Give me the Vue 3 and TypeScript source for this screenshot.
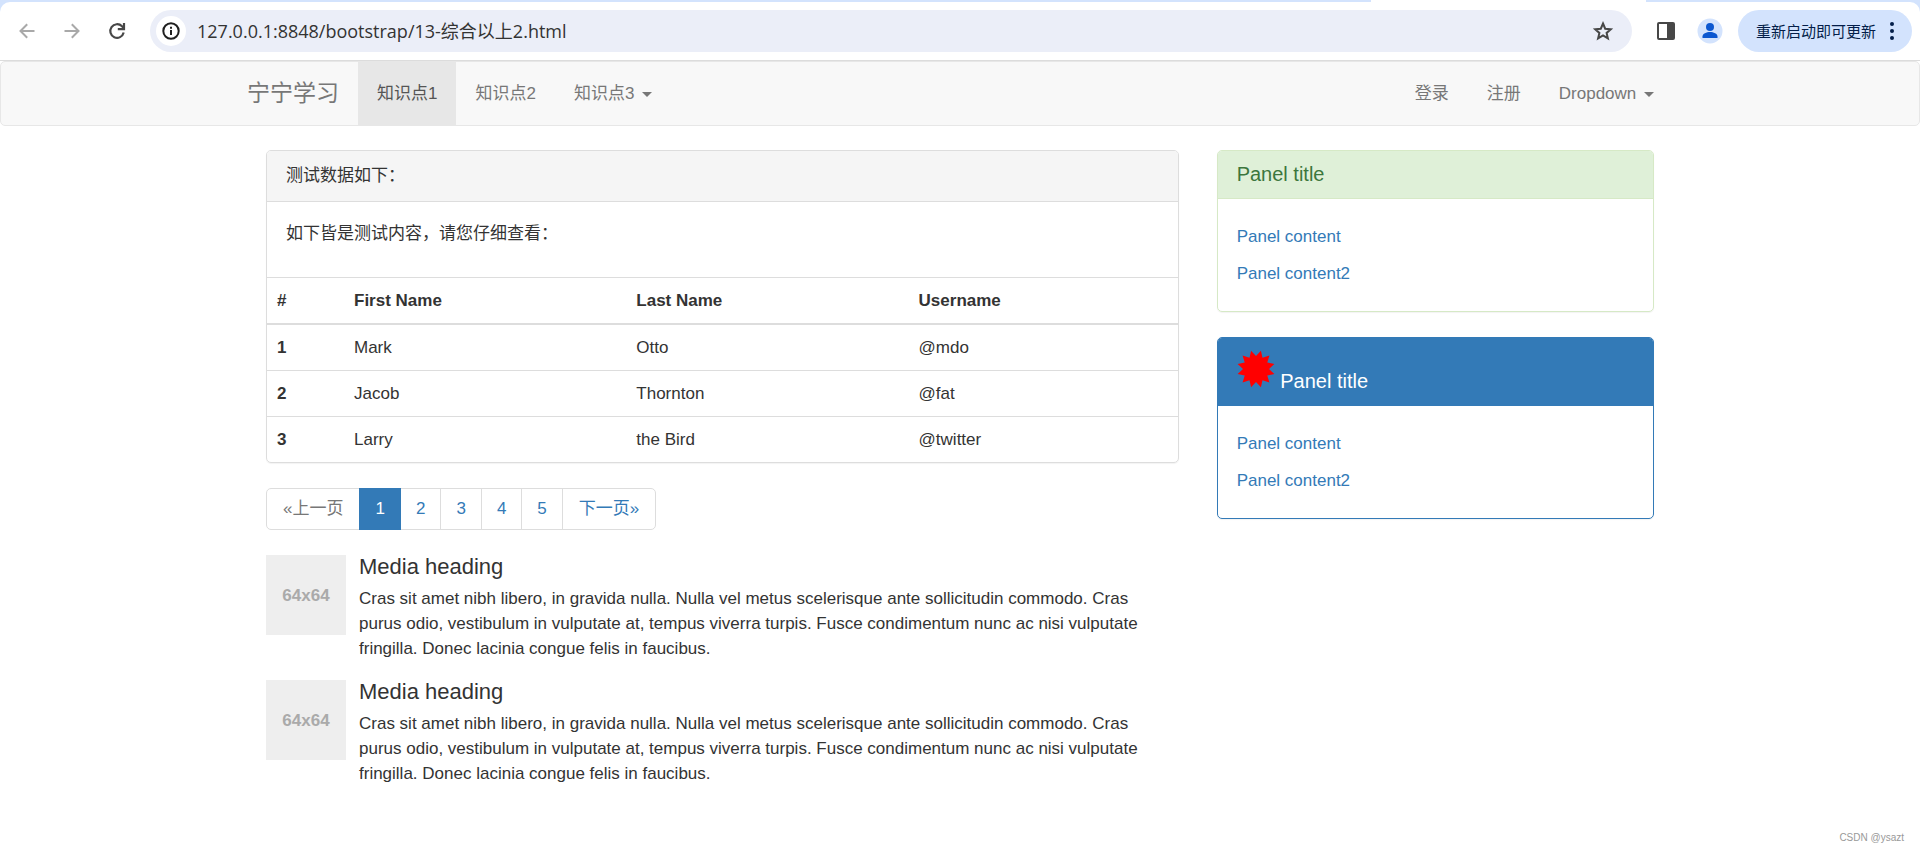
<script setup lang="ts">
import { ref } from 'vue'

interface Person {
  id: number
  first: string
  last: string
  username: string
}

const url = ref('127.0.0.1:8848/bootstrap/13-综合以上2.html')

const people: Person[] = [
  { id: 1, first: 'Mark', last: 'Otto', username: '@mdo' },
  { id: 2, first: 'Jacob', last: 'Thornton', username: '@fat' },
  { id: 3, first: 'Larry', last: 'the Bird', username: '@twitter' },
]

const pages: number[] = [1, 2, 3, 4, 5]
const currentPage = 1

const mediaText =
  'Cras sit amet nibh libero, in gravida nulla. Nulla vel metus scelerisque ante sollicitudin commodo. Cras purus odio, vestibulum in vulputate at, tempus viverra turpis. Fusce condimentum nunc ac nisi vulputate fringilla. Donec lacinia congue felis in faucibus.'

// Twelve-pointed burst: outer and inner vertices alternate every 15 degrees.
const burst = Array.from({ length: 24 }, (_, i) => {
  const angle = ((i * 15 + 15) * Math.PI) / 180
  const radius = i % 2 === 0 ? 19 : 13
  return `${(19 + radius * Math.sin(angle)).toFixed(2)},${(19 - radius * Math.cos(angle)).toFixed(2)}`
}).join(' ')
</script>

<template>
  <div class="window">
    <header class="chrome">
      <div class="tab-strip"><span class="active-tab"></span></div>
      <div class="toolbar">
        <div class="nav-buttons">
          <button type="button" class="icon-button muted" aria-label="后退">
            <svg width="20" height="20" viewBox="0 0 20 20" fill="none" stroke="currentColor" stroke-width="2">
              <path d="M17.5 10H4M10.2 3.3 3.5 10l6.7 6.7" />
            </svg>
          </button>
          <button type="button" class="icon-button muted" aria-label="前进">
            <svg width="20" height="20" viewBox="0 0 20 20" fill="none" stroke="currentColor" stroke-width="2">
              <path d="M2.5 10H16M9.8 3.3 16.5 10l-6.7 6.7" />
            </svg>
          </button>
          <button type="button" class="icon-button" aria-label="重新加载">
            <svg width="20" height="20" viewBox="0 0 20 20" fill="none" stroke="currentColor" stroke-width="2.2">
              <path d="M16.7 11.6A6.8 6.8 0 1 1 15 5.3L17 7.4" />
              <path d="M17 2v6.200h-6.200" />
            </svg>
          </button>
        </div>
        <div class="omnibox">
          <button type="button" class="site-info" aria-label="网站信息">
            <svg width="20" height="20" viewBox="0 0 20 20" fill="none" stroke="currentColor" stroke-width="2">
              <circle cx="10" cy="10" r="7.7" />
              <path d="M10 9v5M10 5.700v2" />
            </svg>
          </button>
          <input v-model="url" class="url" type="text" aria-label="地址" spellcheck="false" />
          <button type="button" class="icon-button" aria-label="收藏">
            <svg width="22" height="22" viewBox="0 0 22 22" fill="none" stroke="currentColor" stroke-width="2">
              <path d="m11 3.5 2.200 5.200 5.600.5-4.200 3.700 1.300 5.500-4.900-2.900-4.900 2.900 1.300-5.500L3.200 9.200l5.600-.5z" />
            </svg>
          </button>
        </div>
        <button type="button" class="icon-button" aria-label="侧边栏">
          <svg width="20" height="20" viewBox="0 0 20 20">
            <rect x="2" y="2" width="16" height="16" rx="1" fill="none" stroke="currentColor" stroke-width="2" />
            <path d="M11 2h7v16h-7z" fill="currentColor" />
          </svg>
        </button>
        <button type="button" class="icon-button avatar" aria-label="用户">
          <svg width="26" height="26" viewBox="0 0 26 26">
            <circle cx="13" cy="13" r="12.5" fill="#d3e3fd" />
            <circle cx="13" cy="9" r="4" fill="#0b57d0" />
            <path d="M5.5 20v-1.500c0-3 4-4.500 7.500-4.500s7.500 1.500 7.500 4.500V20z" fill="#0b57d0" />
          </svg>
        </button>
        <button type="button" class="update">
          <span>重新启动即可更新</span>
          <svg width="6" height="20" viewBox="0 0 6 20" fill="currentColor">
            <circle cx="3" cy="3" r="2" />
            <circle cx="3" cy="10" r="2" />
            <circle cx="3" cy="17" r="2" />
          </svg>
        </button>
      </div>
    </header>

    <nav class="navbar">
      <div class="container navbar-inner">
        <a class="brand" href="#">宁宁学习</a>
        <a class="nav-link active" href="#">知识点1</a>
        <a class="nav-link" href="#">知识点2</a>
        <a class="nav-link" href="#">知识点3 <i class="caret"></i></a>
        <div class="navbar-right">
          <a class="nav-link" href="#">登录</a>
          <a class="nav-link" href="#">注册</a>
          <a class="nav-link" href="#">Dropdown <i class="caret"></i></a>
        </div>
      </div>
    </nav>

    <div class="container columns">
      <main class="column">
        <section class="panel">
          <div class="panel-heading">测试数据如下：</div>
          <div class="panel-body">
            <p>如下皆是测试内容，请您仔细查看：</p>
          </div>
          <table class="table">
            <thead>
              <tr>
                <th class="col-id" scope="col">#</th>
                <th class="col-name" scope="col">First Name</th>
                <th class="col-name" scope="col">Last Name</th>
                <th scope="col">Username</th>
              </tr>
            </thead>
            <tbody>
              <tr v-for="person in people" :key="person.id">
                <th scope="row">{{ person.id }}</th>
                <td>{{ person.first }}</td>
                <td>{{ person.last }}</td>
                <td>{{ person.username }}</td>
              </tr>
            </tbody>
          </table>
        </section>

        <nav class="pagination" aria-label="分页">
          <a class="page step disabled" href="#">«上一页</a>
          <a v-for="page in pages" :key="page" class="page" :class="{ current: page === currentPage }" href="#">{{ page }}</a>
          <a class="page step" href="#">下一页»</a>
        </nav>

        <article v-for="n in 2" :key="n" class="media">
          <a class="thumb" href="#">64x64</a>
          <div class="media-body">
            <h4>Media heading</h4>
            <p>{{ mediaText }}</p>
          </div>
        </article>
      </main>

      <aside class="column">
        <section class="panel success">
          <h3 class="panel-heading title">Panel title</h3>
          <div class="links">
            <a href="#">Panel content</a>
            <a href="#">Panel content2</a>
          </div>
        </section>
        <section class="panel primary">
          <h3 class="panel-heading title">
            <svg class="burst" width="38" height="38" viewBox="0 0 38 38" aria-hidden="true">
              <polygon :points="burst" fill="#f00" />
            </svg>
            Panel title
          </h3>
          <div class="links">
            <a href="#">Panel content</a>
            <a href="#">Panel content2</a>
          </div>
        </section>
      </aside>
    </div>

    <footer class="credit">CSDN @ysazt</footer>
  </div>
</template>

<style>
body {
  margin: 0;
  background: #fff;
}
</style>

<style scoped>
* {
  box-sizing: border-box;
}

.window {
  display: flex;
  flex-direction: column;
  min-height: 100vh;
  color: #333;
  font: 17px/25px "Liberation Sans", Arial, "Noto Sans CJK SC", sans-serif;
}

a {
  color: #337ab7;
  text-decoration: none;
}

button {
  border: 0;
  padding: 0;
  background: none;
  font: inherit;
  cursor: pointer;
}

p,
h3,
h4 {
  margin: 0;
  font-weight: 400;
}

.chrome {
  background: #d3e3fd;
}

.tab-strip {
  display: grid;
  grid-template-columns: 5fr 1fr 1fr;
  height: 2px;
}

.active-tab {
  grid-column: 2;
  background: #fff;
}

.toolbar {
  display: flex;
  align-items: center;
  height: 59px;
  padding: 0 8px 0 17px;
  border-bottom: 1px solid #dcdcdc;
  border-radius: 10px 10px 0 0;
  background: #fff;
}

.nav-buttons {
  display: flex;
  gap: 25px;
  margin-right: 23px;
}

.icon-button {
  display: flex;
  color: #474747;
}

.icon-button.muted {
  color: #a9a9a9;
}

.omnibox {
  display: flex;
  flex: 1;
  align-items: center;
  height: 42px;
  margin-right: 24px;
  padding: 0 18px 0 6px;
  border-radius: 21px;
  background: #ebeef8;
}

.site-info {
  display: flex;
  align-items: center;
  justify-content: center;
  width: 30px;
  height: 30px;
  border-radius: 50%;
  background: #fff;
  color: #1f1f1f;
}

.url {
  flex: 1;
  min-width: 0;
  margin-left: 11px;
  padding: 0;
  border: 0;
  outline: 0;
  background: none;
  color: #333;
  font: 18px/26px "Open Sans", "Noto Sans CJK SC", sans-serif;
}

.avatar {
  margin: 0 15px 0 21px;
}

.update {
  display: flex;
  align-items: center;
  gap: 13px;
  height: 42px;
  padding: 0 17px 0 18px;
  border-radius: 21px;
  background: #d3e3fd;
  color: #041e49;
  font: 15px/20px "Noto Sans CJK SC", sans-serif;
}

.navbar {
  margin-bottom: 24px;
  border: 1px solid #e7e7e7;
  border-radius: 5px;
  background: #f8f8f8;
}

.container {
  width: 100%;
  max-width: 1464px;
  margin: 0 auto;
}

.navbar-inner {
  display: flex;
}

.brand {
  padding: 19px;
  color: #777;
  font-size: 23px;
}

.nav-link {
  padding: 19px;
  color: #777;
}

.nav-link.active {
  background: #e7e7e7;
  color: #555;
}

.navbar-right {
  display: flex;
  margin: 0 19px 0 auto;
}

.caret {
  display: inline-block;
  margin-left: 3px;
  border-top: 5px solid;
  border-right: 5px solid transparent;
  border-left: 5px solid transparent;
  vertical-align: middle;
}

.columns {
  display: grid;
  grid-template-columns: 2fr 1fr;
  padding: 0 19px;
}

.column {
  min-width: 0;
  padding: 0 19px;
}

.panel {
  margin-bottom: 25px;
  border: 1px solid #ddd;
  border-radius: 5px;
  box-shadow: 0 1px 1px rgba(0, 0, 0, 0.05);
  overflow: hidden;
}

.panel-heading {
  padding: 12px 19px 13px;
  border-bottom: 1px solid #ddd;
  background: #f5f5f5;
}

.panel-heading.title {
  font-size: 20px;
  line-height: 22px;
}

.panel-body {
  padding: 19px 19px 31px;
}

.success,
.success .panel-heading {
  border-color: #d6e9c6;
}

.success .panel-heading {
  background: #dff0d8;
  color: #3c763d;
}

.primary,
.primary .panel-heading {
  border-color: #337ab7;
}

.primary .panel-heading {
  background: #337ab7;
  color: #fff;
}

.links {
  display: flex;
  flex-direction: column;
  align-items: flex-start;
  gap: 12px;
  padding: 25px 19px;
}

.table {
  width: 100%;
  border-collapse: separate;
  border-spacing: 0;
  table-layout: fixed;
  text-align: left;
}

.table th,
.table td {
  padding: 10px;
  border-top: 1px solid #ddd;
}

.table tbody tr:first-child > * {
  border-top-width: 2px;
}

.col-id {
  width: 77px;
}

.col-name {
  width: 31%;
}

.pagination {
  display: flex;
  margin-bottom: 25px;
}

.page {
  margin-left: -1px;
  padding: 8px 15px;
  border: 1px solid #ddd;
  line-height: 24px;
}

.page.step {
  padding: 8px 16px;
}

.page:first-child {
  margin-left: 0;
  border-radius: 5px 0 0 5px;
}

.page:last-child {
  border-radius: 0 5px 5px 0;
}

.page.disabled {
  color: #777;
}

.page.current {
  z-index: 1;
  border-color: #337ab7;
  background: #337ab7;
  color: #fff;
}

.media {
  display: flex;
  gap: 13px;
  margin-bottom: 19px;
}

.thumb {
  display: flex;
  flex: none;
  align-items: center;
  justify-content: center;
  width: 80px;
  height: 80px;
  background: #eee;
  color: #aaa;
  font-size: 17px;
  font-weight: 700;
}

.media-body {
  flex: 1;
  padding-right: 16px;
}

.media-body h4 {
  margin-bottom: 7px;
  font-size: 22px;
  line-height: 24px;
}

.credit {
  margin-top: auto;
  padding: 0 16px 7px;
  color: #999;
  font-size: 10px;
  line-height: 18px;
  text-align: right;
}
</style>
